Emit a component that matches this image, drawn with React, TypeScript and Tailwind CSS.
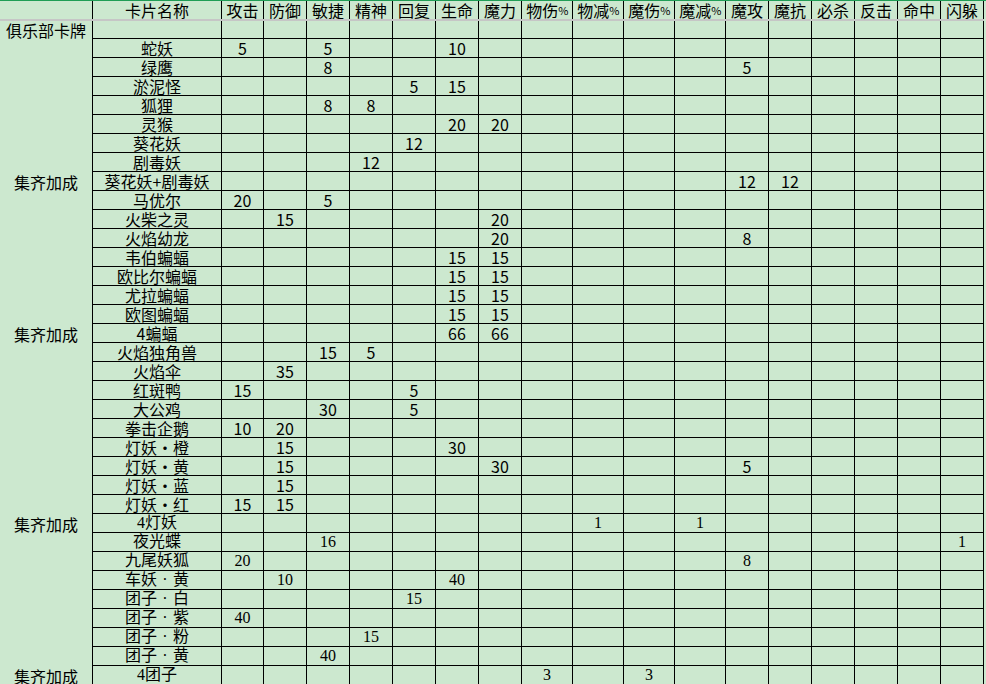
import React from 'react';

// 卡牌属性表（仿 Excel 护眼绿底表格）

type Row = {
  tag?: string;
  name: string;
  v: Record<number, string>;
};

const heads = [
  '攻击', '防御', '敏捷', '精神', '回复', '生命', '魔力',
  '物伤%', '物减%', '魔伤%', '魔减%',
  '魔攻', '魔抗', '必杀', '反击', '命中', '闪躲',
];

const rows: Row[] = [
  { name: '蛇妖', v: { 0: '5', 2: '5', 5: '10' } },
  { name: '绿鹰', v: { 2: '8', 11: '5' } },
  { name: '淤泥怪', v: { 4: '5', 5: '15' } },
  { name: '狐狸', v: { 2: '8', 3: '8' } },
  { name: '灵猴', v: { 5: '20', 6: '20' } },
  { name: '葵花妖', v: { 4: '12' } },
  { name: '剧毒妖', v: { 3: '12' } },
  { tag: '集齐加成', name: '葵花妖+剧毒妖', v: { 11: '12', 12: '12' } },
  { name: '马优尔', v: { 0: '20', 2: '5' } },
  { name: '火柴之灵', v: { 1: '15', 6: '20' } },
  { name: '火焰幼龙', v: { 6: '20', 11: '8' } },
  { name: '韦伯蝙蝠', v: { 5: '15', 6: '15' } },
  { name: '欧比尔蝙蝠', v: { 5: '15', 6: '15' } },
  { name: '尤拉蝙蝠', v: { 5: '15', 6: '15' } },
  { name: '欧图蝙蝠', v: { 5: '15', 6: '15' } },
  { tag: '集齐加成', name: '4蝙蝠', v: { 5: '66', 6: '66' } },
  { name: '火焰独角兽', v: { 2: '15', 3: '5' } },
  { name: '火焰伞', v: { 1: '35' } },
  { name: '红斑鸭', v: { 0: '15', 4: '5' } },
  { name: '大公鸡', v: { 2: '30', 4: '5' } },
  { name: '拳击企鹅', v: { 0: '10', 1: '20' } },
  { name: '灯妖·橙', v: { 1: '15', 5: '30' } },
  { name: '灯妖·黄', v: { 1: '15', 6: '30', 11: '5' } },
  { name: '灯妖·蓝', v: { 1: '15' } },
  { name: '灯妖·红', v: { 0: '15', 1: '15' } },
  { tag: '集齐加成', name: '4灯妖', v: { 8: '1', 10: '1' } },
  { name: '夜光蝶', v: { 2: '16', 16: '1' } },
  { name: '九尾妖狐', v: { 0: '20', 11: '8' } },
  { name: '车妖·黄', v: { 1: '10', 5: '40' } },
  { name: '团子·白', v: { 4: '15' } },
  { name: '团子·紫', v: { 0: '40' } },
  { name: '团子·粉', v: { 3: '15' } },
  { name: '团子·黄', v: { 2: '40' } },
  { tag: '集齐加成', name: '4团子', v: { 7: '3', 9: '3' } },
];

// 从 4灯妖 起数字用衬线字体
const SERIF_FROM = 25;

const grid =
  'grid grid-cols-[93px_129px_42px_43px_43px_43px_43px_43px_43px_51px_51px_51px_51px_43px_43px_43px_43px_43px_43px]';

const sansFont = "font-['Noto_Sans_CJK_SC',sans-serif]";
const serifFont = "font-['Liberation_Serif','Noto_Sans_CJK_SC',serif]";

function Name({ text }: { text: string }) {
  const parts = text.split('·');
  return (
    <>
      {parts.map((p, i) => (
        <React.Fragment key={i}>
          {i > 0 && <span className="inline-block w-4 text-center">·</span>}
          {p}
        </React.Fragment>
      ))}
    </>
  );
}

function Head({ text }: { text: string }) {
  if (!text.endsWith('%')) return <>{text}</>;
  return (
    <>
      {text.slice(0, -1)}
      <span className="text-[11px] tracking-[-0.5px]">%</span>
    </>
  );
}

const cell = 'flex items-center justify-center border-r border-black leading-[18px] whitespace-nowrap';

export default function App() {
  return (
    <div
      className={`w-[986px] h-[684px] overflow-hidden bg-[#cce8cf] text-black text-[16px] ${sansFont}`}
    >
      {/* 表头 */}
      <div className={`${grid} h-[19px] border-t border-[#1f9d55]`}>
        <div className={cell} />
        <div className={cell}>卡片名称</div>
        {heads.map((h) => (
          <div key={h} className={cell}>
            <Head text={h} />
          </div>
        ))}
      </div>
      <div className="h-[2px] w-[984px] bg-[#c6c6c6]" />

      {/* 俱乐部卡牌 */}
      <div className={`${grid} h-[18px]`}>
        <div className={cell}>俱乐部卡牌</div>
        <div className={`${cell} border-b`} />
        {heads.map((h) => (
          <div key={h} className={`${cell} border-b`} />
        ))}
      </div>

      {rows.map((r, ri) => (
        <div key={r.name} className={`${grid} h-[19px] ${ri >= SERIF_FROM ? serifFont : ''}`}>
          <div className={`${cell} ${sansFont}`}>{r.tag ?? ''}</div>
          <div className={`${cell} border-b`}>
            <Name text={r.name} />
          </div>
          {heads.map((h, ci) => (
            <div key={h} className={`${cell} border-b`}>
              {r.v[ci] ?? ''}
            </div>
          ))}
        </div>
      ))}
    </div>
  );
}
